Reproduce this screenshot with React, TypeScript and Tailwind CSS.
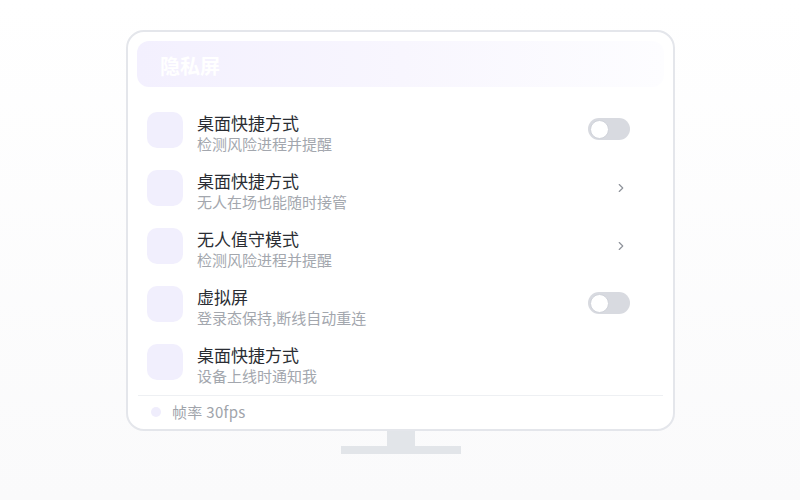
import { ChevronRight } from "lucide-react";

type Row = { title: string; desc: string; action: "toggle" | "chevron" | "none" };

const rows: Row[] = [
  { title: "桌面快捷方式", desc: "检测风险进程并提醒", action: "toggle" },
  { title: "桌面快捷方式", desc: "无人在场也能随时接管", action: "chevron" },
  { title: "无人值守模式", desc: "检测风险进程并提醒", action: "chevron" },
  { title: "虚拟屏", desc: "登录态保持,断线自动重连", action: "toggle" },
  { title: "桌面快捷方式", desc: "设备上线时通知我", action: "none" },
];

function Toggle() {
  return (
    <div className="mt-[6px] flex h-[22px] w-[42px] items-center rounded-full bg-[#d8dae0] px-[2px]">
      <div className="h-[19px] w-[19px] rounded-full border border-[#d0d3da] bg-white" />
    </div>
  );
}

export default function App() {
  return (
    <div
      className="min-h-[500px] w-full bg-gradient-to-b from-white to-[#fafafb] pl-[126px] pt-[30px]"
      style={{ fontFamily: '"Noto Sans CJK SC", "Noto Sans", sans-serif' }}
    >
      <div className="flex w-[549px] flex-col items-center">
        <div className="flex h-[401px] w-full flex-col rounded-[18px] border-2 border-[#e4e6eb] bg-white px-[9px] pt-[9px]">
          <div className="flex h-[46px] items-center rounded-xl bg-gradient-to-r from-[#f3f0fe] via-[#f8f6fe] to-[#fdfdff] pl-[23px] pt-[3px]">
            <span className="text-[20px] font-bold leading-none text-white">隐私屏</span>
          </div>

          <div className="mt-[25px] flex flex-col gap-[22px] px-[10px]">
            {rows.map((r, i) => (
              <div key={i} className="flex h-[36px] items-start">
                <div className="h-[36px] w-[36px] shrink-0 rounded-[10px] bg-[#f1effd]" />
                <div className="ml-[14px] flex flex-1 flex-col">
                  <span className="text-[17px] leading-[22px] text-[#2a2d33]">{r.title}</span>
                  <span className="text-[15px] leading-[20px] text-[#a3a7ae]">{r.desc}</span>
                </div>
                <div className="mr-[24px] flex w-[42px] justify-end">
                  {r.action === "toggle" && <Toggle />}
                  {r.action === "chevron" && (
                    <ChevronRight className="mr-[2px] mt-[11px] h-[14px] w-[14px] text-[#8f939b]" strokeWidth={2} />
                  )}
                </div>
              </div>
            ))}
          </div>

          <div className="mx-px mt-[15px] border-t border-[#eef0f3]" />
          <div className="flex h-[32px] items-center gap-[11px] pl-[14px]">
            <div className="h-[10px] w-[10px] rounded-full bg-[#efedfc]" />
            <span className="text-[15px] tracking-[0.3px] text-[#a0a4ab]">帧率 30fps</span>
          </div>
        </div>
        <div className="h-[15px] w-[28px] bg-[#e2e5e9]" />
        <div className="h-[8px] w-[120px] bg-[#e2e5e9]" />
      </div>
    </div>
  );
}
